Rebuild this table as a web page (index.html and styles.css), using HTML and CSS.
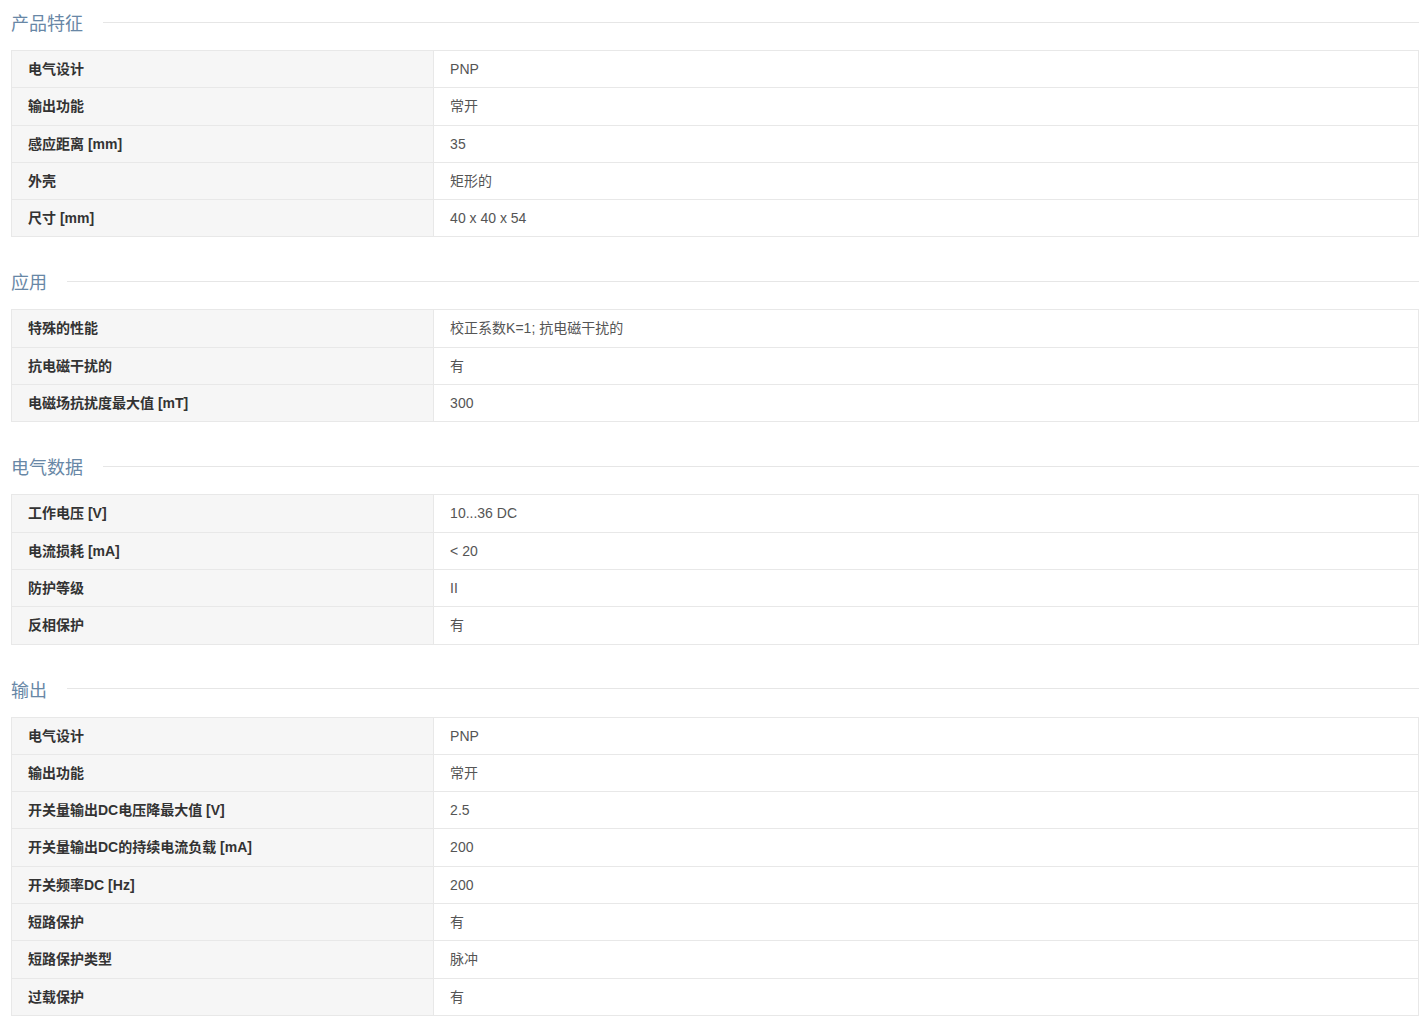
FILE: index.html
```html
<!DOCTYPE html>
<html lang="zh-CN">
<head>
  <meta charset="UTF-8" />
  <meta name="viewport" content="width=device-width, initial-scale=1.0"/>
  <title>产品参数</title>
  <link rel="stylesheet" href="styles.css">
</head>
<body>
  <div class="spec-page">

    <!-- 产品特征 -->
    <div class="spec-title"><span>产品特征</span></div>
    <table class="spec-table">
      <tr><td class="spec-name">电气设计</td><td class="spec-value">PNP</td></tr>
      <tr><td class="spec-name">输出功能</td><td class="spec-value">常开</td></tr>
      <tr><td class="spec-name">感应距离 [mm]</td><td class="spec-value">35</td></tr>
      <tr><td class="spec-name">外壳</td><td class="spec-value">矩形的</td></tr>
      <tr><td class="spec-name">尺寸 [mm]</td><td class="spec-value">40 x 40 x 54</td></tr>
    </table>

    <!-- 应用 -->
    <div class="spec-title"><span>应用</span></div>
    <table class="spec-table">
      <tr><td class="spec-name">特殊的性能</td><td class="spec-value">校正系数K=1; 抗电磁干扰的</td></tr>
      <tr><td class="spec-name">抗电磁干扰的</td><td class="spec-value">有</td></tr>
      <tr><td class="spec-name">电磁场抗扰度最大值 [mT]</td><td class="spec-value">300</td></tr>
    </table>

    <!-- 电气数据 -->
    <div class="spec-title"><span>电气数据</span></div>
    <table class="spec-table">
      <tr><td class="spec-name">工作电压 [V]</td><td class="spec-value">10...36 DC</td></tr>
      <tr><td class="spec-name">电流损耗 [mA]</td><td class="spec-value">&lt; 20</td></tr>
      <tr><td class="spec-name">防护等级</td><td class="spec-value">II</td></tr>
      <tr><td class="spec-name">反相保护</td><td class="spec-value">有</td></tr>
    </table>

    <!-- 输出 -->
    <div class="spec-title"><span>输出</span></div>
    <table class="spec-table">
      <tr><td class="spec-name">电气设计</td><td class="spec-value">PNP</td></tr>
      <tr><td class="spec-name">输出功能</td><td class="spec-value">常开</td></tr>
      <tr><td class="spec-name">开关量输出DC电压降最大值 [V]</td><td class="spec-value">2.5</td></tr>
      <tr><td class="spec-name">开关量输出DC的持续电流负载 [mA]</td><td class="spec-value">200</td></tr>
      <tr><td class="spec-name">开关频率DC [Hz]</td><td class="spec-value">200</td></tr>
      <tr><td class="spec-name">短路保护</td><td class="spec-value">有</td></tr>
      <tr><td class="spec-name">短路保护类型</td><td class="spec-value">脉冲</td></tr>
      <tr><td class="spec-name">过载保护</td><td class="spec-value">有</td></tr>
    </table>

  </div>
</body>
</html>
```

FILE: styles.css
```css
body {
  font-family: "Liberation Sans", "Noto Sans CJK SC", sans-serif;
  background-color: #fff;
  margin: 0;
  padding: 0;
}

.spec-page {
  padding: 0 8px 0 11px;
}

/* Section title with line */
.spec-title {
  display: flex;
  align-items: center;
  height: 44px;
  margin-top: 22px;
  margin-bottom: 6px;
  font-size: 18px;
  color: #6887a6;
}

.spec-title:first-child {
  margin-top: 0;
}

.spec-title::after {
  content: "";
  flex: 1;
  height: 1px;
  background-color: #e6e6e6;
  margin-left: 20px;
}

/* Table */
.spec-table {
  width: 100%;
  border-collapse: collapse;
  border: 1px solid #e8e8e8;
  font-size: 14px;
}

.spec-table td {
  border-top: 1px solid #e8e8e8;
  padding: 8px 16px;
  line-height: 20.3px;
  text-align: left;
}

.spec-name {
  width: 30%;
  background-color: #f6f6f6;
  border-right: 1px solid #e8e8e8;
  font-weight: bold;
  color: #333;
}

.spec-value {
  color: #555;
  padding-left: 15px;
}
```
